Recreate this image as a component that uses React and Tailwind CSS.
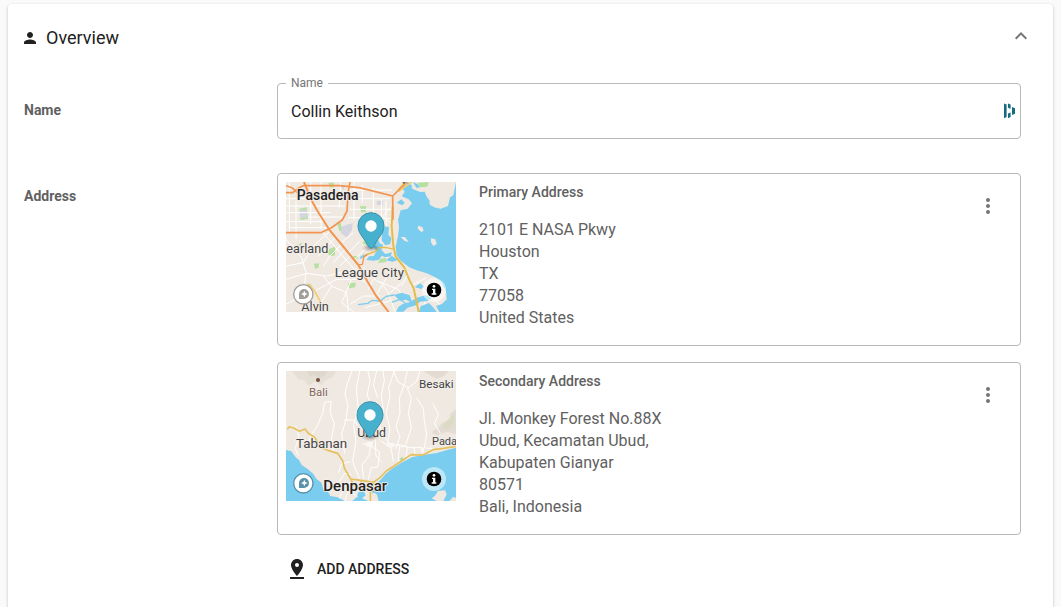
import { useState } from "react";
import { MdExpandLess, MdMoreVert, MdPerson, MdPinDrop } from "react-icons/md";

const addresses = [
  {
    id: 1,
    title: "Primary Address",
    lines: ["2101 E NASA Pkwy", "Houston", "TX", "77058", "United States"],
    Map: HoustonMap,
  },
  {
    id: 2,
    title: "Secondary Address",
    lines: [
      "Jl. Monkey Forest No.88X",
      "Ubud, Kecamatan Ubud,",
      "Kabupaten Gianyar",
      "80571",
      "Bali, Indonesia",
    ],
    Map: BaliMap,
  },
];

function MapLabel({ x, y, size = 39, weight = 400, fill = "#444444", children }) {
  return (
    <text
      x={x}
      y={y}
      fontSize={size}
      fontWeight={weight}
      fill={fill}
      stroke="#f4efea"
      strokeWidth="5"
      strokeLinejoin="round"
      paintOrder="stroke"
    >
      {children}
    </text>
  );
}

function MapPin({ x, y }) {
  return (
    <g transform={`translate(${x} ${y})`}>
      <ellipse cx="0" cy="0" rx="25" ry="11" fill="#000000" opacity="0.08" />
      <ellipse cx="0" cy="-1" rx="18" ry="8" fill="#000000" opacity="0.12" />
      <ellipse cx="0" cy="-2" rx="11" ry="5" fill="#000000" opacity="0.15" />
      <path
        d="M0 0 C-6 0 -10 -8 -16 -19 C-25 -34 -39 -46 -39 -67 A39 39 0 0 1 39 -67 C39 -46 25 -34 16 -19 C10 -8 6 0 0 0Z"
        fill="#46b0cd"
        stroke="#3691ab"
        strokeWidth="3"
      />
      <circle cx="0" cy="-66" r="17" fill="#ffffff" />
    </g>
  );
}

function MapBadges({ logo }) {
  return (
    <g>
      <circle cx="70" cy="355" r="29" fill="#ffffff" stroke={logo} strokeWidth="4" />
      <path d="M57 369 V354 A15 15 0 1 1 72 369Z" fill={logo} />
      <path d="M73 344 L76 351 L83 354 L76 357 L73 364 L70 357 L63 354 L70 351Z" fill="#ffffff" />
      <circle cx="462" cy="342" r="36" fill="#ffffff" opacity="0.5" />
      <circle cx="462" cy="342" r="22" fill="#000000" />
      <circle cx="462" cy="331" r="4" fill="#ffffff" />
      <path d="M456 338 H466 V352 H469 V356 H455 V352 H459 V342 H456Z" fill="#ffffff" />
    </g>
  );
}

function HoustonMap() {
  return (
    <svg viewBox="18 18 510 390" className="block h-[130px] w-[170px] shrink-0" role="img" aria-label="Map of League City">
      <rect x="18" y="18" width="510" height="390" fill="#f0e9e2" />

      {/* parks and airports */}
      <g fill="#b5e0a0">
        <path d="M145 20 H162 V34 H148Z M58 98 L80 94 L84 128 L62 132Z M172 143 L182 140 L188 168 L178 165Z M148 218 L166 212 L165 238 L151 241 L143 232Z M203 322 L228 320 L225 334 L208 337Z M102 263 L117 262 L115 276 L105 278Z M300 249 L318 246 L319 258 L294 261Z M412 20 L446 18 L442 32 L420 34Z M54 206 L65 200 L63 211Z M240 91 H258 V109 H243Z M220 240 H234 V248 H220Z M247 201 L256 190 L262 210Z M80 325 H94 V337 H82Z" />
      </g>
      <g fill="#d4d5e0">
        <path d="M60 101 H80 V126 H60Z M187 151 L218 141 L216 162 L200 184 L182 171Z M180 31 L194 27 L192 42Z M290 76 L308 73 V87 H291Z" />
      </g>

      {/* local streets */}
      <g stroke="#ffffff" strokeWidth="3" fill="none">
        <path d="M28 18 V170 M48 75 V190 M92 18 V145 M123 18 V160 M182 18 L178 92 M222 18 V130 M247 28 V80 M280 34 V115 M304 70 V140 M318 75 V155" />
        <path d="M18 68 H75 M18 90 H195 M20 110 H150 M18 137 H130 M30 155 H150 M84 123 H190 M205 42 H335 M205 68 H330 M210 100 H335 M205 125 H245" />
        <path d="M150 165 L100 210 L70 260 L18 270 M168 182 L115 240 M185 205 L150 240 L130 270 M198 218 L160 260 M213 237 L180 270 M220 170 L185 200 M240 195 L205 230 M260 215 L218 255 M125 165 L210 265 L250 310" />
        <path d="M18 190 L65 245 L78 290 L74 322 M18 310 L80 292 L140 300 L230 278 M104 345 L170 310 L240 310 L255 318 M18 385 L45 370 M130 300 L155 330 L200 350 L205 407 M155 330 L120 385 L140 407 M215 310 L185 380 L220 407 M250 275 L290 315 L355 340 L372 370 M280 310 L265 340 M300 315 L325 350 L345 407 M320 305 L290 355 M365 320 L330 350 M210 385 L250 360 H300 M255 395 L330 375 M385 290 L365 330 M390 330 L440 305" />
        <path d="M330 95 L310 120 L340 150 M275 125 L335 128 M300 145 L325 180 M410 315 L440 350 L432 390 M440 350 L480 385" />
      </g>

      {/* Galveston Bay */}
      <g fill="#7acdef">
        <path d="M364 31 L382 26 L400 40 L420 48 L434 47 L440 62 L450 76 L462 94 L482 98 L504 90 L510 64 L520 58 L528 18 V408 H478 L468 390 L486 384 L500 370 L498 346 L484 318 L466 304 L440 292 L410 283 L388 274 L372 262 L360 252 L350 238 L347 212 L354 180 L357 153 L354 132 L362 103 L383 98 L396 82 L386 70 L365 61 L374 48Z" />
        <path d="M374 18 H385 L397 31 L392 38 L380 27Z M398 18 L413 25 L420 34 L410 36Z M350 80 L364 70 L374 80 L367 88Z" />
        <path d="M275 192 L293 189 L299 202 L310 207 L304 221 L316 234 L336 229 L332 241 L315 244 L305 239 L297 251 L280 254 L259 252 L267 241 L281 240 L290 225 L280 212Z" />
        <path d="M306 168 L316 151 L327 154 L325 177 L334 186 L331 204 L316 208 L305 193Z M255 240 L243 249 L239 244 L252 235Z M318 253 L335 239 L353 252 L338 257Z" />
        <path d="M342 357 L365 350 L389 358 L397 380 L378 371 L360 374Z M368 384 L390 378 L410 365 L438 357 L455 367 L442 375 L420 377 L408 388 L383 395 L370 407 H348 L356 392Z M422 391 L447 381 L462 397 L470 408 H416Z M404 334 L420 322 L433 332 L425 339Z" />
      </g>
      <path d="M234 386 L264 382 L276 373 L300 375 L319 361 L343 357 M335 379 L360 370 L382 386" fill="none" stroke="#7acdef" strokeWidth="4" />
      <path d="M414 149 L427 153 L431 163 L425 169 L413 158Z M453 187 L466 190 L470 204 L460 210 L453 199Z M362 183 H375 L386 198 L374 195Z M447 76 L460 80 L465 94 L451 88Z" fill="#f0e9e2" />

      {/* highways */}
      <g fill="none" stroke="#f3cc6b" strokeWidth="5">
        <path d="M84 323 L104 345 L121 377 L124 392 M395 18 L356 46 M375 18 L353 43" />
      </g>
      <g fill="none" stroke="#e5bd4b" strokeWidth="6">
        <path d="M338 92 L335 150 L340 210 L347 242 L372 273 L389 314 L401 337 L416 408" />
        <path d="M255 237 L286 227 L297 215 L316 214 L344 220" strokeWidth="4" />
      </g>
      <g fill="none" stroke="#f19551" strokeLinejoin="round">
        <path d="M72 18 L92 68 L112 104 L147 160 L186 207 L235 267 L262 316 L288 359 L326 408" strokeWidth="6" />
        <path d="M18 170 H122 L153 156 L187 132 L201 105 L205 45 L210 18 M18 50 H38 L57 35 L70 29 H180 L237 35 L286 47 L338 60 L339 131 M338 60 L381 18 M18 29 L36 35 L52 50" strokeWidth="5" />
        <path d="M236 267 L247 265 L252 242 L262 236" strokeWidth="4" />
      </g>

      <path d="M367 19 H376 L372 24Z" fill="#444444" />
      <MapLabel x={50} y={72} size={42} weight={500} fill="#222222">Pasadena</MapLabel>
      <MapLabel x={19} y={230} size={38}>earland</MapLabel>
      <MapLabel x={164} y={302} size={40}>League City</MapLabel>
      <MapLabel x={64} y={404} size={38}>Alvin</MapLabel>
      <MapPin x={273} y={216} />
      <MapBadges logo="#a19e98" />
    </svg>
  );
}

function BaliMap() {
  return (
    <svg viewBox="18 18 510 390" className="block h-[130px] w-[170px] shrink-0" role="img" aria-label="Map of Ubud">
      <rect x="18" y="18" width="510" height="390" fill="#f0e9e2" />

      {/* hills */}
      <g fill="#d8cfc2">
        <path d="M36 18 H170 L158 35 L137 46 L124 60 L105 48 L86 63 L74 46 L54 43Z" opacity="0.4" />
        <path d="M80 18 H142 L133 34 L115 38 L102 29 L91 36Z" opacity="0.5" />
        <path d="M430 18 H505 L493 33 L470 41 L450 31Z" opacity="0.55" />
        <path d="M528 132 L510 148 L512 165 L489 172 L476 187 L455 202 L470 211 L500 200 L528 207Z" opacity="0.5" />
      </g>
      <path d="M508 157 L522 151 L520 174 L503 193 L488 191 L493 178Z" fill="#cedbb2" opacity="0.5" />
      <path d="M359 283 L365 276 L370 280 L366 287Z" fill="#a8dd9c" />

      {/* ocean */}
      <g fill="#7acdef">
        <path d="M18 255 L34 259 L47 277 L57 285 L65 300 L83 312 L100 327 L109 341 L125 354 L130 374 L144 380 L151 393 L173 397 L194 408 H18Z" />
        <path d="M528 248 L501 255 L470 264 L430 270 L397 276 L364 293 L339 309 L319 325 L302 344 L290 355 L278 379 L291 389 L296 408 H470 L455 400 L465 392 L474 378 L495 376 L500 388 L490 408 H508 L519 396 L528 398Z" />
        <path d="M235 382 L252 379 L257 391 L246 400 L265 408 H217 L230 397Z M276 374 L285 381 L277 386Z" />
      </g>

      {/* local roads */}
      <g stroke="#ffffff" strokeWidth="3" fill="none" strokeLinejoin="round">
        <path d="M216 18 L202 55 L195 87 L204 120 L198 165 L185 207 L194 265 M239 18 L229 71 L234 126 L221 179 L228 229 L218 290 L238 340 M264 18 L270 47 L261 91 L280 127 M290 18 L280 60 L293 98 M309 18 L313 46 L304 91 L310 133 L299 181 L310 208 L328 239" />
        <path d="M343 18 L326 67 L330 94 L318 145 L330 189 L323 235 M382 18 L374 55 L358 99 L360 144 L348 185 L360 215 L347 252 M420 18 L410 49 L382 71 L394 99 L385 144 L394 188 L378 237 M340 18 L354 51 L388 70" />
        <path d="M154 109 L134 112 L128 145 L111 184 L94 210 L80 245 M154 109 L150 140 L163 177 L155 217 L160 260 M193 165 H221 L233 180 M47 183 L57 215 L46 250 L55 272" />
        <path d="M248 236 L272 242 L268 270 L246 300 L251 341 M272 242 L299 261 L293 307 H274 L265 343 M285 217 L288 273 L304 290 M302 226 L322 242 L358 239 L389 248 L426 248 L433 267 M332 243 L340 289 M359 240 L354 290 M382 245 L379 281 M402 248 L405 267 M433 168 L440 207 L433 248 L460 252 M410 98 L430 130 L433 168" />
        <path d="M158 377 L181 345 L194 325 L214 329 M178 400 L190 375 L220 352 M195 408 L205 376 H240 M207 349 L215 380 L233 396 M211 290 L184 297 L175 325 M458 115 L475 148 L463 175 L481 205 M473 225 L450 248" />
      </g>
      <path d="M320 233 H342 V247 H323Z M359 239 H379 V247 H363Z M422 248 H432 V262 H423Z M258 230 H278 V246 H260Z" fill="#fbf8f4" />

      {/* main roads */}
      <g fill="none" stroke="#e5c15e" strokeWidth="5" strokeLinejoin="round">
        <path d="M22 193 L28 185 L43 190 L58 199 L75 192 L84 204 L105 218 L121 247 L143 256 L173 265 L188 287 L193 309 L212 342 L243 346 L280 352 L300 338 L319 318 L342 303 L369 285 L393 269 L429 270 L459 254 L490 250 L528 244" />
        <path d="M213 342 L220 361 L271 370 V408 M243 345 L245 371 M281 351 L276 381" />
      </g>

      <circle cx="114" cy="45" r="6" fill="#744f42" />
      <MapLabel x={87} y={94} size={34} fill="#83675c">Bali</MapLabel>
      <MapLabel x={417} y={69} size={35}>Besaki</MapLabel>
      <MapLabel x={48} y={250} size={40}>Tabanan</MapLabel>
      <MapLabel x={456} y={239} size={33}>Pada</MapLabel>
      <MapLabel x={232} y={215} size={37}>Ubud</MapLabel>
      <MapLabel x={130} y={378} size={45} weight={500} fill="#222222">Denpasar</MapLabel>
      <MapPin x={270} y={216} />
      <MapBadges logo="#5792a9" />
    </svg>
  );
}

function AddressCard({ address }) {
  const { title, lines, Map } = address;

  return (
    <div className="flex items-start rounded border border-[#b8b8b8] p-2 pb-4">
      <Map />
      <div className="ml-[23px] flex-1 text-[#616161]">
        <h3 className="text-sm leading-5 font-medium">{title}</h3>
        <address className="mt-[17px] text-base leading-[22px] not-italic">
          {lines.map((line) => (
            <div key={line}>{line}</div>
          ))}
        </address>
      </div>
      <button
        type="button"
        aria-label={`${title} options`}
        className="mt-3 mr-3 cursor-pointer text-2xl text-[#757575]"
      >
        <MdMoreVert />
      </button>
    </div>
  );
}

export default function App() {
  const [name, setName] = useState("Collin Keithson");
  const [open, setOpen] = useState(true);

  return (
    <div className="min-h-screen bg-[#fafafa] px-2 pt-1 font-['Roboto',sans-serif] text-[#212121]">
      <section className="min-h-[calc(100vh-4px)] rounded-t bg-white pr-8 pb-6 pl-4 shadow-[0_1px_3px_rgba(0,0,0,0.25)]">
        <header className="flex h-16 items-center justify-between">
          <h2 className="-ml-[3px] flex items-center gap-[7px] pt-1 text-lg">
            <MdPerson />
            Overview
          </h2>
          <button
            type="button"
            aria-label="Toggle overview"
            aria-expanded={open}
            onClick={() => setOpen(!open)}
            className="-mr-3 cursor-pointer text-2xl text-[#757575]"
          >
            <MdExpandLess className={open ? "" : "rotate-180"} />
          </button>
        </header>

        {open && (
          <div className="grid grid-cols-[253px_1fr] gap-y-[34px] pt-[15px]">
            <label htmlFor="name" className="pt-[17px] text-sm font-bold text-[#616161]">
              Name
            </label>
            <div className="relative flex h-14 items-center rounded border border-[#b8b8b8] pr-1 focus-within:border-[#757575]">
              <span className="absolute -top-[9px] left-2 bg-white px-[5px] text-xs leading-4 text-[#757575]">
                Name
              </span>
              <input
                id="name"
                type="text"
                value={name}
                onChange={(e) => setName(e.target.value)}
                className="h-full min-w-0 flex-1 bg-transparent px-[13px] text-base outline-none"
              />
              <svg viewBox="0 0 12 16" className="h-4 w-3 text-[#176b80]" fill="currentColor" aria-hidden="true">
                <path d="M0 0.5 L2.6 1.5 V14 L0 15.2Z M4 0.5 L6.6 1.5 V6 L4 4.8Z M8 4 L11 5.2 V10.8 L8 12Z M4 10.6 L6.6 9.4 V14 L4 15.2Z" />
              </svg>
            </div>

            <h3 className="pt-[13px] text-sm font-bold text-[#616161]">Address</h3>
            <div className="flex flex-col gap-4">
              {addresses.map((address) => (
                <AddressCard key={address.id} address={address} />
              ))}
              <button
                type="button"
                className="ml-2 flex h-9 cursor-pointer items-center gap-2 self-start text-sm font-medium"
              >
                <MdPinDrop className="text-2xl" />
                ADD ADDRESS
              </button>
            </div>
          </div>
        )}
      </section>
    </div>
  );
}
